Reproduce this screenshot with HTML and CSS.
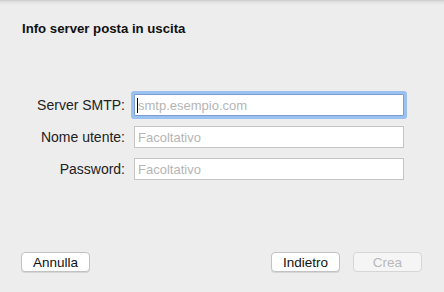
FILE: index.html
```html
<!DOCTYPE html>
<html lang="it">
<head>
<meta charset="utf-8">
<title>Info server posta in uscita</title>
<link rel="stylesheet" href="styles.css">
</head>
<body>
<div class="sheet">
  <h1 class="title">Info server posta in uscita</h1>
  <form class="form">
    <label class="label" for="smtp">Server SMTP:</label>
    <div class="field focused"><span class="caret"></span><input id="smtp" class="input" type="text" placeholder="smtp.esempio.com"></div>
    <label class="label" for="user">Nome utente:</label>
    <div class="field"><input id="user" class="input" type="text" placeholder="Facoltativo"></div>
    <label class="label" for="pass">Password:</label>
    <div class="field"><input id="pass" class="input" type="password" placeholder="Facoltativo"></div>
  </form>
  <div class="footer">
    <button class="btn" type="button">Annulla</button>
    <div class="right">
      <button class="btn" type="button">Indietro</button>
      <button class="btn disabled" type="button" disabled>Crea</button>
    </div>
  </div>
</div>
</body>
</html>
```

FILE: styles.css
```css
html, body {
  margin: 0;
  padding: 0;
}
body {
  background: #ededed;
  font-family: "Liberation Sans", Arial, sans-serif;
  font-size: 13px;
  color: #1a1a1a;
  width: 444px;
  height: 292px;
  overflow: hidden;
}
.sheet {
  height: 292px;
  box-sizing: border-box;
  display: flex;
  flex-direction: column;
  background: linear-gradient(to bottom, #c9c9c9 0, #e2e2e2 2px, #ededed 5px, #ededed 100%);
  padding: 21px 21px 20px 21px;
}
.title {
  margin: 0 0 0 1px;
  font-size: 13.2px;
  font-weight: bold;
  line-height: 16px;
  color: #111;
}
.form {
  margin-top: 57px;
  display: grid;
  grid-template-columns: 104px 270px;
  column-gap: 9px;
  row-gap: 10px;
  align-items: center;
}
.label {
  text-align: right;
  color: #222;
  font-size: 14px;
  line-height: 16px;
}
.field {
  position: relative;
  height: 22px;
  box-sizing: border-box;
  border: 1px solid #c4c4c4;
  background: #fff;
  display: flex;
  align-items: center;
}
.field.focused {
  border-color: #7d9fcf;
  box-shadow: 0 0 0 3px #9bc1f1;
  border-radius: 1px;
}
.caret {
  position: absolute;
  left: 2px;
  top: 3px;
  width: 1px;
  height: 15px;
  background: #000;
}
.input {
  border: none;
  outline: none;
  background: transparent;
  font-family: "Liberation Sans", Arial, sans-serif;
  font-size: 13px;
  color: #222;
  padding: 0 0 0 3px;
  margin: 0;
  width: 100%;
  height: 18px;
}
.input::placeholder {
  color: #b5b5b5;
}
.footer {
  margin-top: auto;
  display: flex;
  justify-content: space-between;
  align-items: flex-end;
  padding-right: 1px;
}
.right {
  display: flex;
  gap: 13px;
}
.btn {
  width: 69px;
  height: 20px;
  box-sizing: border-box;
  border: 1px solid #c2c2c2;
  border-radius: 4px;
  background: #fff;
  font-family: "Liberation Sans", Arial, sans-serif;
  font-size: 13.5px;
  color: #111;
  padding: 0;
  line-height: 17px;
  box-shadow: 0 1px 0 #d6d6d6;
}
.btn.disabled {
  background: #f5f5f5;
  color: #b8b8b8;
  border-color: #d6d6d6;
  box-shadow: none;
}
```
